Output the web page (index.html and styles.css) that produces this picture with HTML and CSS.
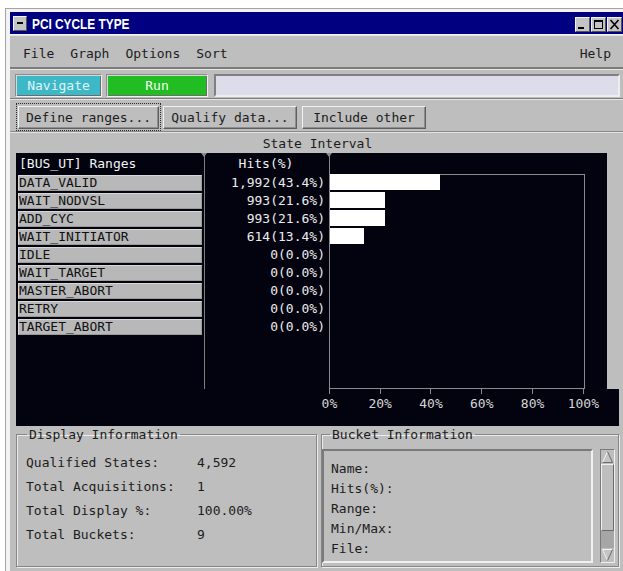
FILE: index.html
```html
<!DOCTYPE html>
<html>
<head>
<meta charset="utf-8">
<title>PCI CYCLE TYPE</title>
<link rel="stylesheet" href="styles.css">
</head>
<body>
<div class="window">
  <div class="titlebar">
    <span class="sysmenu"></span>
    <span class="title">PCI CYCLE TYPE</span>
    <span class="wbtns">
      <span class="wbtn"><svg width="13" height="13" viewBox="0 0 13 13"><rect x="2" y="9" width="6" height="2" fill="#000"/></svg></span>
      <span class="wbtn"><svg width="13" height="13" viewBox="0 0 13 13"><rect x="2.5" y="2.5" width="8" height="8" fill="none" stroke="#000"/><rect x="2" y="2" width="9" height="2" fill="#000"/></svg></span>
      <span class="wbtn"><svg width="13" height="13" viewBox="0 0 13 13"><path d="M2.5 2 L10.5 11 M10.5 2 L2.5 11" stroke="#000" stroke-width="1.6" fill="none"/></svg></span>
    </span>
  </div>

  <div class="client">
    <div class="menubar">
      <span>File</span><span>Graph</span><span>Options</span><span>Sort</span>
      <span class="help">Help</span>
    </div>

    <div class="navrow">
      <button class="btn-nav">Navigate</button>
      <button class="btn-run">Run</button>
      <div class="field"></div>
    </div>

    <div class="toolrow">
      <div class="focus"><button class="btn btn-define">Define ranges...</button></div>
      <button class="btn btn-qualify">Qualify data...</button>
      <button class="btn btn-include">Include other</button>
    </div>

    <div class="caption">State Interval</div>

    <div class="chart">
      <div class="chart-main">
        <div class="col-ranges">
          <div class="col-head">[BUS_UT] Ranges</div>
          <div class="range">DATA_VALID</div>
          <div class="range">WAIT_NODVSL</div>
          <div class="range">ADD_CYC</div>
          <div class="range">WAIT_INITIATOR</div>
          <div class="range">IDLE</div>
          <div class="range">WAIT_TARGET</div>
          <div class="range">MASTER_ABORT</div>
          <div class="range">RETRY</div>
          <div class="range">TARGET_ABORT</div>
        </div>
        <div class="col-hits">
          <div class="col-head hits-head">Hits(%)</div>
          <div class="hit">1,992(43.4%)</div>
          <div class="hit">993(21.6%)</div>
          <div class="hit">993(21.6%)</div>
          <div class="hit">614(13.4%)</div>
          <div class="hit">0(0.0%)</div>
          <div class="hit">0(0.0%)</div>
          <div class="hit">0(0.0%)</div>
          <div class="hit">0(0.0%)</div>
          <div class="hit">0(0.0%)</div>
        </div>
        <div class="col-plot">
          <div class="frame">
            <div class="bars">
              <div class="bar" style="width:43.4%"></div>
              <div class="bar" style="width:21.6%"></div>
              <div class="bar" style="width:21.6%"></div>
              <div class="bar" style="width:13.4%"></div>
            </div>
          </div>
        </div>
      </div>
      <div class="axis">
        <div class="tick">0%</div>
        <div class="tick">20%</div>
        <div class="tick">40%</div>
        <div class="tick">60%</div>
        <div class="tick">80%</div>
        <div class="tick">100%</div>
      </div>
    </div>

    <div class="info">
      <fieldset class="group group-display">
        <legend>Display Information</legend>
        <div class="stats">
          <div class="stat"><span class="stat-label">Qualified States:</span><span>4,592</span></div>
          <div class="stat"><span class="stat-label">Total Acquisitions:</span><span>1</span></div>
          <div class="stat"><span class="stat-label">Total Display %:</span><span>100.00%</span></div>
          <div class="stat"><span class="stat-label">Total Buckets:</span><span>9</span></div>
        </div>
      </fieldset>
      <fieldset class="group group-bucket">
        <legend>Bucket Information</legend>
        <div class="bucket-body">
          <div class="bucket-text">
            <div>Name:</div>
            <div>Hits(%):</div>
            <div>Range:</div>
            <div>Min/Max:</div>
            <div>File:</div>
          </div>
          <div class="vscroll">
            <div class="arrow"><svg width="13" height="14" viewBox="0 0 13 14"><path d="M6.5 1.5 L1.5 12.5 L11.5 12.5 Z" fill="#c4c4c4"/><path d="M6.5 1.5 L1.5 12.5" stroke="#f4f4f4" fill="none"/><path d="M6.5 1.5 L11.5 12.5 L1.5 12.5" stroke="#6a6a6a" fill="none"/></svg></div>
            <div class="thumb"></div>
            <div class="trough"></div>
            <div class="arrow"><svg width="13" height="14" viewBox="0 0 13 14"><path d="M1.5 1.5 L11.5 1.5 L6.5 12.5 Z" fill="#c4c4c4"/><path d="M11.5 1.5 L1.5 1.5 L6.5 12.5" stroke="#f4f4f4" fill="none"/><path d="M11.5 1.5 L6.5 12.5" stroke="#6a6a6a" fill="none"/></svg></div>
          </div>
        </div>
      </fieldset>
    </div>
  </div>
</div>
</body>
</html>
```

FILE: styles.css
```css
* { box-sizing: border-box; }

html, body {
  margin: 0;
  padding: 0;
}

body {
  width: 623px;
  height: 571px;
  overflow: hidden;
  background: #ffffff;
  font-family: "DejaVu Sans Mono", "Liberation Mono", monospace;
  font-size: 13px;
  color: #1c1c1c;
}

/* outer window frame */
.window {
  margin: 8px 0 0 5px;
  width: 618px;
  height: 563px;
  border-top: 1px solid #a4a4a4;
  border-left: 1px solid #a4a4a4;
  padding: 3px 0 0 4px;
  background: #f3f3f3;
  display: flex;
  flex-direction: column;
}

/* title bar */
.titlebar {
  flex: none;
  height: 22px;
  background: #000080;
  display: flex;
  align-items: center;
  padding: 0 1px 0 3px;
}

.sysmenu {
  width: 14px;
  height: 15px;
  background: #c4c4c4;
  border: 1px solid;
  border-color: #f4f4f4 #555555 #555555 #f4f4f4;
  display: flex;
  align-items: center;
  justify-content: center;
}

.sysmenu::before {
  content: "";
  width: 6px;
  height: 2px;
  background: #000;
}

.title {
  margin-left: 5px;
  color: #ffffff;
  font-family: "Liberation Sans", Arial, sans-serif;
  font-weight: bold;
  font-size: 15px;
  white-space: nowrap;
  transform: scaleX(0.79);
  transform-origin: left center;
}

.wbtns {
  margin-left: auto;
  display: flex;
  gap: 1px;
  margin-top: 2px;
}

.wbtn {
  width: 15px;
  height: 15px;
  background: #c4c4c4;
  border: 1px solid;
  border-color: #f4f4f4 #555555 #555555 #f4f4f4;
  display: flex;
  align-items: center;
  justify-content: center;
}

.wbtn svg { display: block; }

/* window body */
.client {
  flex: 1;
  margin-top: 1px;
  background: #bebebe;
  display: flex;
  flex-direction: column;
  min-height: 0;
}

.menubar {
  flex: none;
  height: 34px;
  display: flex;
  align-items: center;
  gap: 16px;
  padding: 3px 12px 0 13px;
  border-top: 1px solid #e4e4e4;
  border-bottom: 2px solid #7c7c7c;
}

.menubar .help { margin-left: auto; }

/* navigate / run row */
.navrow {
  flex: none;
  display: flex;
  align-items: stretch;
  height: 30px;
  padding: 4px 3px 1px 5px;
  border-top: 1px solid #e6e6e6;
  border-bottom: 1px solid #7c7c7c;
}

button {
  font-family: inherit;
  font-size: 13px;
  margin: 0;
  padding: 0;
}

.btn-nav, .btn-run {
  height: 23px;
  border: 1px solid;
  border-color: #8c8c8c #f0f0f0 #f0f0f0 #8c8c8c;
  box-shadow: inset 1px 1px 0 #d8d8d8, inset -1px -1px 0 #6c6c6c;
}

.btn-nav {
  width: 87px;
  background: #3cb8c6;
  color: #e2f4f6;
}

.btn-run {
  width: 102px;
  margin-left: 4px;
  background: #22bd22;
  color: #f2fff2;
}

.field {
  flex: 1;
  height: 23px;
  margin-left: 6px;
  background: #dcdcea;
  border: 2px solid;
  border-color: #808080 #eeeeee #eeeeee #808080;
}

/* define / qualify / include row */
.toolrow {
  flex: none;
  display: flex;
  align-items: center;
  height: 33px;
  padding: 3px 0 0 6px;
  border-top: 1px solid #e6e6e6;
  border-bottom: 1px solid #8a8a8a;
}

.focus {
  height: 28px;
  padding: 1px;
  border: 1px dotted #2a2a2a;
  display: flex;
  align-items: center;
}

.btn {
  height: 23px;
  background: #bebebe;
  color: #1c1c1c;
  border: 1px solid;
  border-color: #f2f2f2 #5e5e5e #5e5e5e #f2f2f2;
  box-shadow: inset -1px -1px 0 #8e8e8e;
}

.btn-define { width: 141px; }
.btn-qualify { width: 134px; margin-left: 2px; }
.btn-include { width: 124px; margin-left: 5px; }

.caption {
  flex: none;
  height: 21px;
  line-height: 21px;
  text-align: center;
  border-top: 1px solid #e2e2e2;
  padding-left: 2px;
}

/* chart */
.chart {
  flex: none;
  margin-left: 6px;
  display: flex;
  flex-direction: column;
}

.chart-main {
  width: 591px;
  height: 236px;
  background: #03030f;
  display: flex;
}

.col-head {
  height: 22px;
  line-height: 22px;
  color: #f2f2f2;
}

.col-ranges {
  width: 188px;
  padding: 0 2px 0 2px;
}

.col-ranges .col-head { padding-left: 1px; }

.range {
  height: 16px;
  line-height: 13px;
  margin-bottom: 2px;
  background: #b8b8b8;
  border: 1px solid;
  border-color: #d8d8d8 #9a9a9a #9a9a9a #d8d8d8;
  color: #111111;
  white-space: nowrap;
}

.col-hits {
  position: relative;
  width: 125px;
  border-left: 1px solid #7e7e7e;
  color: #ececec;
  text-align: right;
  padding-right: 4px;
}

.hits-head {
  text-align: center;
  padding-left: 2px;
}

.hit {
  height: 16px;
  line-height: 16px;
  margin-bottom: 2px;
}

.col-plot {
  position: relative;
  flex: 1;
  border-left: 1px solid #8a8a8a;
}

/* small markers on top of the column separators */
.col-hits::before,
.col-plot::before {
  content: "";
  position: absolute;
  top: 0;
  left: -4px;
  border-left: 3px solid transparent;
  border-right: 3px solid transparent;
  border-top: 4px solid #8a8a8a;
}

.frame {
  margin-top: 21px;
  width: 255px;
  height: 215px;
  border-top: 1px solid #8a8a8a;
  border-right: 1px solid #8a8a8a;
  border-bottom: 1px solid #8a8a8a;
}

.bars { margin-top: -1px; }

.bar {
  height: 16px;
  margin-bottom: 2px;
  background: #ffffff;
}

.axis {
  width: 603px;
  height: 37px;
  background: #03030f;
  display: flex;
  padding-left: 288px;
}

.tick {
  width: 50.8px;
  flex: none;
  display: flex;
  flex-direction: column;
  align-items: center;
  color: #d6d6d6;
  line-height: 14px;
}

.tick::before {
  content: "";
  width: 1px;
  height: 5px;
  background: #8a8a8a;
  margin-bottom: 3px;
}

/* information panels */
.info {
  flex: none;
  display: flex;
  gap: 4px;
  margin: 1px 0 0 6px;
}

.group {
  margin: 0;
  padding: 0;
  min-width: 0;
  border: 1px solid #858585;
  box-shadow: inset 1px 1px 0 #ececec, 1px 1px 0 #ececec;
}

.group legend {
  padding: 0 2px;
  line-height: 15px;
}

.group-display { width: 301px; }
.group-display legend { margin-left: 10px; }

.stats { padding: 9px 0 19px 9px; }

.stat {
  height: 24px;
  line-height: 24px;
  white-space: nowrap;
}

.stat-label {
  display: inline-block;
  width: 171px;
}

.group-bucket { width: 298px; }
.group-bucket legend { margin-left: 8px; }

.bucket-body {
  display: flex;
  padding: 7px 3px 2px 0;
}

.bucket-text {
  flex: 1;
  height: 114px;
  padding: 8px 0 0 7px;
  border: 2px solid;
  border-color: #7a7a7a #f0f0f0 #f0f0f0 #7a7a7a;
  line-height: 20px;
}

.vscroll {
  width: 15px;
  height: 114px;
  margin-left: 7px;
  display: flex;
  flex-direction: column;
  background: #a6a6a6;
  border: 1px solid;
  border-color: #7a7a7a #eeeeee #eeeeee #7a7a7a;
}

.arrow {
  height: 14px;
  flex: none;
  background: #bebebe;
}

.arrow svg { display: block; }

.thumb {
  height: 67px;
  flex: none;
  background: #bebebe;
  border: 1px solid;
  border-color: #f0f0f0 #6a6a6a #6a6a6a #f0f0f0;
}

.trough { flex: 1; }
```
